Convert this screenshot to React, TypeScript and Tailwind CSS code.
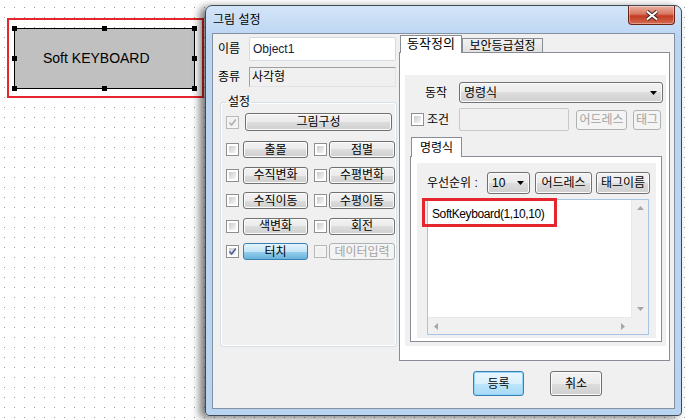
import type { ReactNode } from "react";

const btn =
  "flex items-center justify-center rounded-[3px] border border-[#707070] bg-[linear-gradient(#f2f2f2,#ebebeb_50%,#dddddd_50%,#cfcfcf)] shadow-[inset_0_0_0_1px_#fbfbfb] text-black";
const btnOff =
  "flex items-center justify-center rounded-[3px] border border-[#adb2b5] bg-[#f4f4f4] text-[#a3a3a3]";

function Check({ checked, disabled }: { checked?: boolean; disabled?: boolean }) {
  return (
    <div
      className={
        disabled
          ? "w-[13px] h-[13px] shrink-0 border border-[#b8b8b8] bg-[#f4f4f4] p-[2px]"
          : "w-[13px] h-[13px] shrink-0 border border-[#8e8f8f] bg-white p-[2px]"
      }
    >
      <div
        className={
          disabled
            ? "relative w-full h-full bg-[#f0f0f0]"
            : "relative w-full h-full bg-[linear-gradient(135deg,#cbcbcb,#f7f7f7)]"
        }
      >
        {checked && (
          <svg viewBox="0 0 9 9" className="absolute left-[-1px] top-[-1px] w-[9px] h-[9px]">
            <path
              d="M1.5 4.5 L3.6 7 L7.8 1.5"
              fill="none"
              stroke={disabled ? "#b0b0b0" : "#4a5f97"}
              strokeWidth={1.6}
            />
          </svg>
        )}
      </div>
    </div>
  );
}

function Arrow() {
  return (
    <svg viewBox="0 0 7 4" className="w-[7px] h-[4px]">
      <path d="M0 0 L7 0 L3.5 4 Z" fill="#000" />
    </svg>
  );
}

function Tab({ children, w, h, big }: { children: ReactNode; w: string; h: string; big?: boolean }) {
  return (
    <div
      className={`${w} ${h} relative z-10 flex items-start justify-center border-x border-t border-[#898c95] bg-white pt-[1px] ${
        big ? "text-[13px]" : "text-[12px]"
      }`}
    >
      {children}
    </div>
  );
}

function Row({ a, b, aOn }: { a: string; b: string; aOn?: boolean }) {
  return (
    <div className="flex items-center h-[17px]">
      <Check checked={aOn} />
      <div
        className={
          aOn
            ? "ml-[4px] w-[65px] h-[17px] flex items-center justify-center rounded-[3px] border border-[#3c7fb1] bg-[linear-gradient(#e5f4fc,#c4e5f6_50%,#98d1ef_50%,#68b3db)] text-black"
            : `ml-[4px] w-[65px] h-[17px] ${btn}`
        }
      >
        {a}
      </div>
      <div className="ml-[6px]">
        <Check disabled={b === "데이터입력"} />
      </div>
      <div className={`ml-[2px] w-[66px] h-[17px] ${b === "데이터입력" ? btnOff : btn}`}>{b}</div>
    </div>
  );
}

export default function App() {
  return (
    <div className="relative w-[688px] h-[420px] overflow-hidden bg-white bg-[radial-gradient(circle_at_0.5px_0.5px,#9a9a9a_0.8px,transparent_0.8px)] bg-[length:10px_10px] bg-[position:4px_7px] font-['Liberation_Sans','Noto_Sans_CJK_KR',sans-serif] text-[12px] leading-[14px] text-black">
      {/* canvas object */}
      <div className="absolute left-[7px] top-[18px] w-[197px] h-[80px] border-2 border-[#e5262d]" />
      <div className="absolute left-[14px] top-[28px] w-[181px] h-[61px] border border-black bg-[#c0c0c0] flex items-center pl-[28px] text-[14px] leading-[16px] pb-px">
        Soft KEYBOARD
      </div>
      {[12, 102, 192].map((x) =>
        [26, 56, 86].map((y) =>
          x === 102 && y === 56 ? null : (
            <div
              key={`${x}-${y}`}
              className="absolute w-[5px] h-[5px] bg-black"
              style={{ left: x, top: y }}
            />
          )
        )
      )}

      {/* dialog window */}
      <div className="absolute left-[205px] top-[5px] w-[477px] h-[411px] flex flex-col rounded-t-[7px] rounded-b-[4px] border border-[#3f4a57] bg-[linear-gradient(#d3e5f8,#bcd6f2_30px,#b9d4f1)] shadow-[-5px_2px_9px_rgba(0,0,0,0.55)]">
        <div className="h-[27px] flex items-start justify-between pl-[7px] pr-[6px]">
          <span className="mt-[7px] text-[12px]">그림 설정</span>
          <div className="w-[47px] h-[19px] flex items-center justify-center rounded-b-[4px] border border-t-0 border-[#6a2418] bg-[linear-gradient(#eab0a3,#d9765f_45%,#c33b22_55%,#d56a50)] shadow-[inset_0_0_0_1px_rgba(255,255,255,0.35)]">
            <svg viewBox="0 0 14 11" className="w-[14px] h-[11px]">
              <path d="M2 1.5 L12 9.5 M12 1.5 L2 9.5" stroke="#3b2a28" strokeWidth={4} />
              <path d="M2 1.5 L12 9.5 M12 1.5 L2 9.5" stroke="#ffffff" strokeWidth={2} />
            </svg>
          </div>
        </div>

        <div className="mx-[6px] h-[376px] border border-[#8391a1] bg-[#f0f0f0] flex flex-col">
          <div className="flex">
            {/* left column */}
            <div className="ml-[5px] w-[179px] flex flex-col">
              <div className="mt-[3px] h-[24px] flex items-center">
                <span className="w-[31px]">이름</span>
                <div className="w-[147px] h-[24px] flex items-center pl-[3px] rounded-[2px] border border-[#d3d9e0] bg-white text-[#14213d]">
                  Object1
                </div>
              </div>
              <div className="mt-[6px] h-[20px] flex items-center">
                <span className="w-[31px]">종류</span>
                <div className="w-[147px] h-[20px] flex items-center pl-[2px] border border-t-[#a0a0a0] border-l-[#a0a0a0] border-r-[#e3e3e3] border-b-[#e3e3e3] bg-[#f0f0f0]">
                  사각형
                </div>
              </div>
              <fieldset className="mt-[8px] ml-[2px] w-[177px] h-[252px] rounded-[3px] border border-[#d5dfe5] shadow-[inset_0_0_0_1px_#ffffff] pl-[5px]">
                <legend className="px-[2px] leading-[14px]">설정</legend>
                <div className="mt-[4px] flex items-center h-[18px]">
                  <Check checked disabled />
                  <div className={`ml-[6px] w-[147px] h-[18px] ${btn}`}>그림구성</div>
                </div>
                <div className="mt-[10px] flex flex-col gap-y-[8.6px]">
                  <Row a="출몰" b="점멸" />
                  <Row a="수직변화" b="수평변화" />
                  <Row a="수직이동" b="수평이동" />
                  <Row a="색변화" b="회전" />
                  <Row a="터치" b="데이터입력" aOn />
                </div>
              </fieldset>
            </div>

            {/* right column */}
            <div className="ml-[2px] w-[271px] mt-[1px] flex flex-col">
              <div className="flex items-end h-[18px]">
                <div className="ml-[1px]">
                  <Tab w="w-[62px]" h="h-[18px]" big>
                    동작정의
                  </Tab>
                </div>
                <div className="w-[81px] h-[15px] flex items-center justify-center border-x border-t border-[#898c95] bg-[linear-gradient(#f2f2f2,#e0e0e0)]">
                  보안등급설정
                </div>
              </div>
              <div className="-mt-px w-[271px] h-[309px] border border-[#898c95] bg-white pt-[22px] pl-[5px] pr-[3px]">
                <div className="w-[261px] h-[271px] bg-[#f0f0f0] flex flex-col">
                  <div className="mt-[7px] h-[21px] flex items-center">
                    <span className="pl-[20px] w-[54px]">동작</span>
                    <div className="w-[204px] h-[21px] flex items-center justify-between pl-[4px] pr-[5px] rounded-[3px] border border-[#707070] bg-[linear-gradient(#f2f2f2,#ebebeb_50%,#dddddd_50%,#cfcfcf)] shadow-[inset_0_0_0_1px_#fbfbfb]">
                      <span>명령식</span>
                      <Arrow />
                    </div>
                  </div>
                  <div className="mt-[5px] h-[23px] flex items-center">
                    <div className="w-[54px] flex items-center pl-[6px]">
                      <Check />
                      <span className="ml-[3px]">조건</span>
                    </div>
                    <div className="w-[110px] h-[23px] rounded-[2px] border border-[#c9c9c9] bg-[#f0f0f0]" />
                    <div className={`ml-[7px] w-[51px] h-[20px] ${btnOff}`}>어드레스</div>
                    <div className={`ml-[6px] w-[28px] h-[20px] ${btnOff}`}>태그</div>
                  </div>
                  <div className="mt-[6px] ml-[6px] flex">
                    <Tab w="w-[51px]" h="h-[20px]">
                      <span className="mt-[2px]">명령식</span>
                    </Tab>
                  </div>
                  <div className="-mt-px ml-[5px] w-[252px] h-[186px] border border-[#898c95] bg-white pt-[6px] pl-[6px] pr-[5px]">
                    <div className="h-[175px] bg-[#f0f0f0] flex flex-col">
                      <div className="mt-[9px] h-[22px] flex items-center pl-[10px]">
                        <span className="w-[60px]">우선순위 :</span>
                        <div className="w-[43px] h-[22px] flex items-center justify-between pl-[4px] pr-[5px] rounded-[3px] border border-[#707070] bg-[linear-gradient(#f2f2f2,#ebebeb_50%,#dddddd_50%,#cfcfcf)] shadow-[inset_0_0_0_1px_#fbfbfb]">
                          <span>10</span>
                          <Arrow />
                        </div>
                        <div className={`ml-[5px] w-[57px] h-[22px] ${btn}`}>어드레스</div>
                        <div className={`ml-[4px] w-[54px] h-[22px] ${btn}`}>태그이름</div>
                      </div>
                      <div className="relative mt-[5px] ml-[10px] w-[222px] h-[136px] border border-[#a6c4e4] bg-white grid grid-cols-[1fr_17px] grid-rows-[1fr_17px]">
                        <div className="pl-[4px] pt-[7px] tracking-[-0.4px]">SoftKeyboard(1,10,10)</div>
                        <div className="flex flex-col items-center justify-between bg-[#f0f0f0] border-l border-[#e8e8e8] py-[6px]">
                          <svg viewBox="0 0 7 4" className="w-[7px] h-[4px]">
                            <path d="M0 4 L7 4 L3.5 0 Z" fill="#a6a6a6" />
                          </svg>
                          <svg viewBox="0 0 7 4" className="w-[7px] h-[4px]">
                            <path d="M0 0 L7 0 L3.5 4 Z" fill="#a6a6a6" />
                          </svg>
                        </div>
                        <div className="flex items-center justify-between bg-[#f0f0f0] border-t border-[#e8e8e8] px-[6px]">
                          <svg viewBox="0 0 4 7" className="w-[4px] h-[7px]">
                            <path d="M4 0 L4 7 L0 3.5 Z" fill="#a6a6a6" />
                          </svg>
                          <svg viewBox="0 0 4 7" className="w-[4px] h-[7px]">
                            <path d="M0 0 L0 7 L4 3.5 Z" fill="#a6a6a6" />
                          </svg>
                        </div>
                        <div className="bg-[#f0f0f0]" />
                        <div className="absolute left-[-6px] top-[-2px] w-[135px] h-[29px] border-[3px] border-[#e5262d]" />
                      </div>
                    </div>
                  </div>
                </div>
              </div>
            </div>
          </div>

          <div className="mt-[10px] pl-[260px] flex gap-[26px]">
            <div className="w-[51px] h-[25px] flex items-center justify-center rounded-[3px] border border-[#3c7fb1] bg-[linear-gradient(#eaf6fd,#d9f0fc_50%,#bee6fd_50%,#a7d9f5)] shadow-[inset_0_0_0_1px_#8fd6f8]">
              등록
            </div>
            <div className={`w-[52px] h-[25px] ${btn}`}>취소</div>
          </div>
        </div>
      </div>
    </div>
  );
}
